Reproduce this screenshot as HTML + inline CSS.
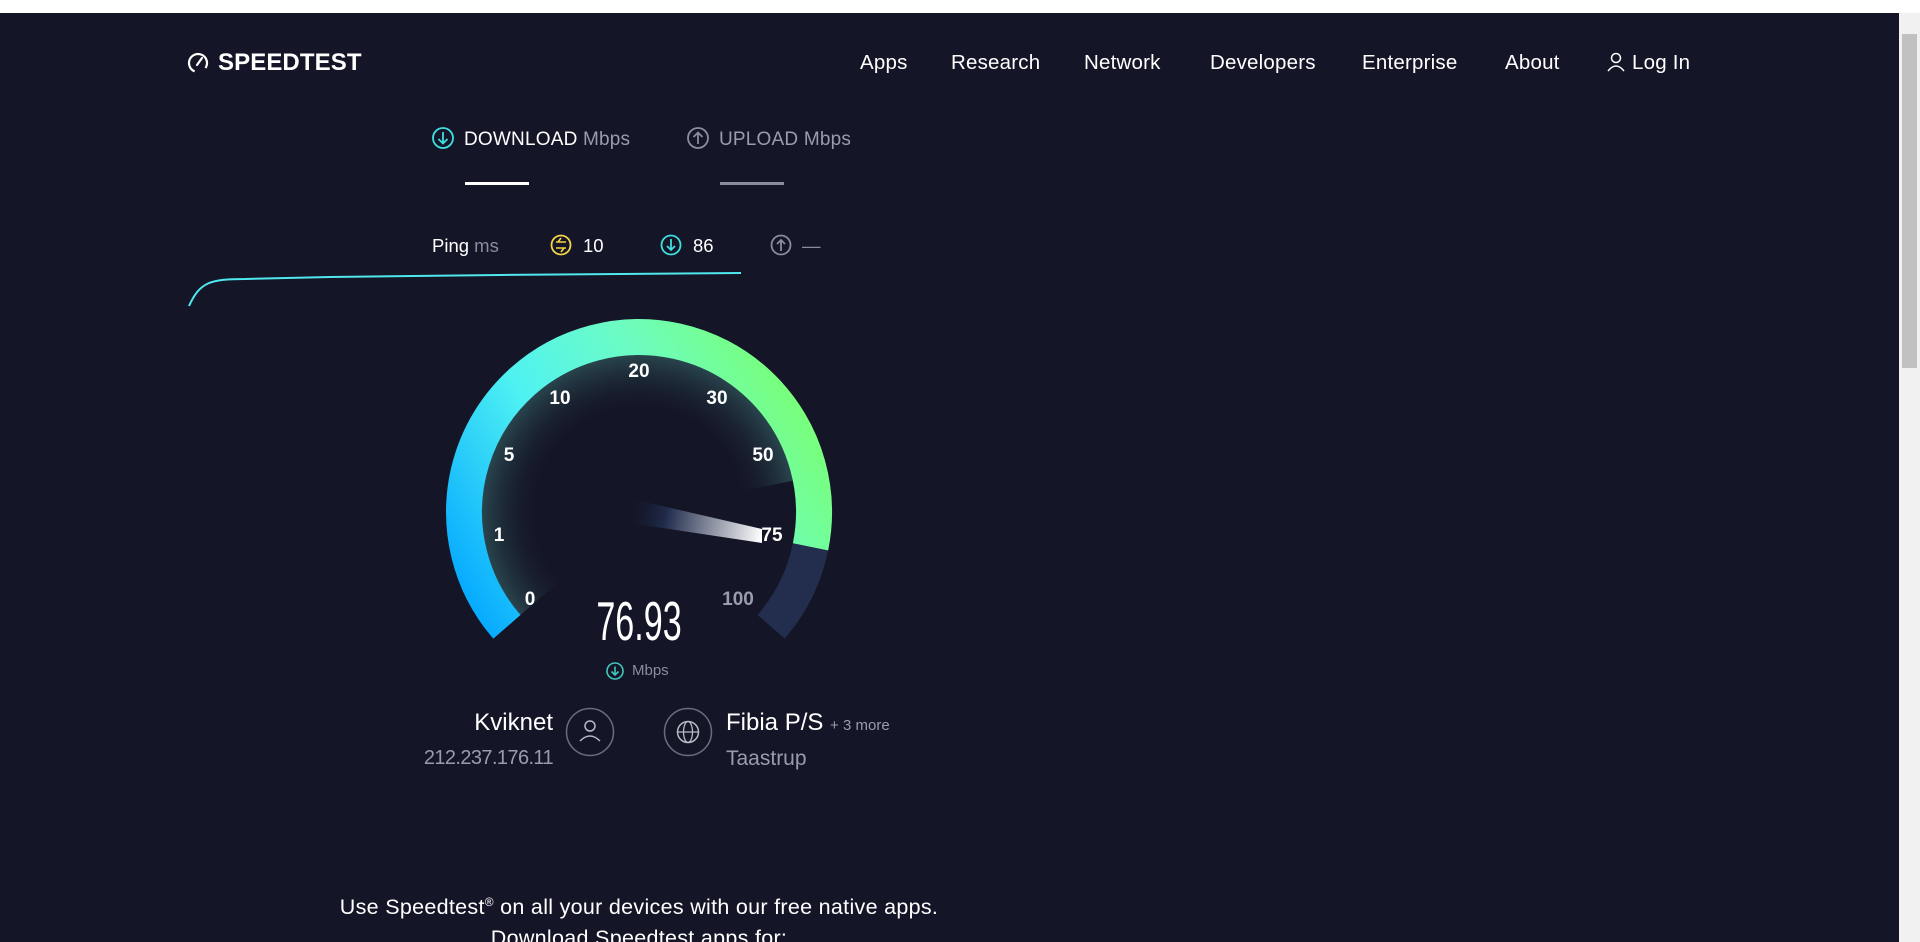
<!DOCTYPE html>
<html><head><meta charset="utf-8"><style>
*{margin:0;padding:0;box-sizing:border-box}
html,body{width:1920px;height:942px;overflow:hidden;background:#fff}
body{position:relative;font-family:"Liberation Sans",sans-serif}
#main{position:absolute;left:0;top:13px;width:1899px;height:929px;background:#141526;overflow:hidden}
.t{position:absolute;white-space:nowrap;color:#fff}
.nav{font-size:20.5px;top:38px;color:#fff;letter-spacing:0.2px}
#sb{position:absolute;left:1899px;top:13px;width:21px;height:929px;background:#f1f1f1}
#thumb{position:absolute;left:3px;top:21px;width:15px;height:334px;background:#c1c1c1}
</style></head><body>
<div id="main">
 <svg style="position:absolute;left:0;top:0" width="1899" height="929" viewBox="0 13 1899 929">
  <defs>
   <linearGradient id="g" gradientUnits="userSpaceOnUse" x1="490" y1="640" x2="820" y2="440">
    <stop offset="0" stop-color="#06aaff"/>
    <stop offset="0.4" stop-color="#4ff2f2"/>
    <stop offset="0.7" stop-color="#6cfcc4"/>
    <stop offset="1" stop-color="#78ff7c"/>
   </linearGradient>
   <radialGradient id="glow" cx="639" cy="512" r="158" gradientUnits="userSpaceOnUse">
    <stop offset="0.6" stop-color="#141526" stop-opacity="0"/>
    <stop offset="1" stop-color="#3a6e6e" stop-opacity="0.55"/>
   </radialGradient>
   <linearGradient id="nd" gradientUnits="userSpaceOnUse" x1="623" y1="510" x2="762" y2="536">
    <stop offset="0" stop-color="#141526" stop-opacity="0"/>
    <stop offset="0.3" stop-color="#1f2a4a"/>
    <stop offset="1" stop-color="#ffffff"/>
   </linearGradient>
  </defs>
  <circle cx="198" cy="63" r="9" fill="none" stroke="#fff" stroke-width="2.2" stroke-dasharray="44 13" transform="rotate(112 198 63)"/>
  <line x1="197" y1="65" x2="202" y2="58" stroke="#fff" stroke-width="2.2" stroke-linecap="round"/>
  <circle cx="1616" cy="58" r="4.5" fill="none" stroke="#fff" stroke-width="1.5"/>
  <path d="M1608 71 q8 -10 16 0" fill="none" stroke="#fff" stroke-width="1.5"/>
  <circle cx="443" cy="138" r="10" fill="none" stroke="#3fe0e0" stroke-width="1.8"/>
  <path d="M443 132v11M438.5 139l4.5 4.5 4.5-4.5" fill="none" stroke="#3fe0e0" stroke-width="1.8"/>
  <circle cx="698" cy="138" r="10" fill="none" stroke="#8a8d9e" stroke-width="1.8"/>
  <path d="M698 144v-11M693.5 137l4.5-4.5 4.5 4.5" fill="none" stroke="#8a8d9e" stroke-width="1.8"/>
  <rect x="465" y="182" width="64" height="3" fill="#fff"/>
  <rect x="720" y="182" width="64" height="3" fill="#8a8d9e"/>
  <circle cx="561" cy="245" r="9.5" fill="none" stroke="#f5d547" stroke-width="1.8"/>
  <path d="M556 242h10M558 242l3-4M556 248h10M564 248l-3 4" fill="none" stroke="#f5d547" stroke-width="1.6"/>
  <circle cx="671" cy="245" r="9.5" fill="none" stroke="#3fe0e0" stroke-width="1.8"/>
  <path d="M671 239v11M667 246l4 4 4-4" fill="none" stroke="#3fe0e0" stroke-width="1.8"/>
  <circle cx="781" cy="245" r="9.5" fill="none" stroke="#8a8d9e" stroke-width="1.8"/>
  <path d="M781 251v-11M777 244l4-4 4 4" fill="none" stroke="#8a8d9e" stroke-width="1.8"/>
  <path d="M189 306 C200 282 210 279 245 279 L330 277 L500 275 L741 273" fill="none" stroke="#4fe8ee" stroke-width="2"/>
  <path d="M639 512 L519.9 615.5 A158 158 0 1 1 794 480.5 Z" fill="url(#glow)"/>
  <path d="M506.9 626.8 A175 175 0 1 1 810.5 546.9" fill="none" stroke="url(#g)" stroke-width="36"/>
  <path d="M810.5 546.9 A175 175 0 0 1 771.1 626.8" fill="none" stroke="#232d4d" stroke-width="36"/>
  <polygon points="623,497 762,529 762,543 623,522" fill="url(#nd)"/>
  <g font-family="Liberation Sans,sans-serif" font-weight="bold" font-size="19" fill="#fff" text-anchor="middle">
   <text x="530" y="605">0</text>
   <text x="499" y="541">1</text>
   <text x="509" y="461">5</text>
   <text x="560" y="404">10</text>
   <text x="639" y="377">20</text>
   <text x="717" y="404">30</text>
   <text x="763" y="461">50</text>
   <text x="772" y="541">75</text>
   <text x="738" y="605" fill="#9a9cab">100</text>
  </g>
  <circle cx="615" cy="671" r="8" fill="none" stroke="#3fc7c0" stroke-width="1.6"/>
  <path d="M615 666.5v8M611.5 671.5l3.5 3.5 3.5-3.5" fill="none" stroke="#3fc7c0" stroke-width="1.6"/>
  <circle cx="590" cy="732" r="23.5" fill="none" stroke="#6b6e80" stroke-width="1.5"/>
  <circle cx="590" cy="726" r="5" fill="none" stroke="#b8bac6" stroke-width="1.5"/>
  <path d="M580 741 q10 -10 20 0" fill="none" stroke="#b8bac6" stroke-width="1.5"/>
  <circle cx="688" cy="732" r="23.5" fill="none" stroke="#6b6e80" stroke-width="1.5"/>
  <circle cx="688" cy="732" r="10.5" fill="none" stroke="#b8bac6" stroke-width="1.5"/>
  <ellipse cx="688" cy="732" rx="4.5" ry="10.5" fill="none" stroke="#b8bac6" stroke-width="1.3"/>
  <path d="M677.5 732h21" stroke="#b8bac6" stroke-width="1.3"/>
 </svg>
 <div class="t" style="left:218px;top:36px;font-size:24px;font-weight:bold;letter-spacing:0.1px">SPEEDTEST</div>
 <div class="t nav" style="left:860px">Apps</div>
 <div class="t nav" style="left:951px">Research</div>
 <div class="t nav" style="left:1084px">Network</div>
 <div class="t nav" style="left:1210px">Developers</div>
 <div class="t nav" style="left:1362px">Enterprise</div>
 <div class="t nav" style="left:1505px">About</div>
 <div class="t nav" style="left:1632px">Log In</div>
 <div class="t" style="left:464px;top:116px;font-size:19px;letter-spacing:0.2px">DOWNLOAD <span style="color:#9a9cab">Mbps</span></div>
 <div class="t" style="left:719px;top:116px;font-size:19px;color:#9a9cab;letter-spacing:0.2px">UPLOAD Mbps</div>
 <div class="t" style="left:432px;top:222px;font-size:18.5px">Ping <span style="color:#8a8d9e">ms</span></div>
 <div class="t" style="left:583px;top:222px;font-size:18.5px">10</div>
 <div class="t" style="left:693px;top:222px;font-size:18.5px">86</div>
 <div class="t" style="left:802px;top:222px;font-size:18.5px;color:#8a8d9e">—</div>
 <div class="t" style="left:539px;top:576px;width:200px;text-align:center;font-size:55px;font-weight:normal;transform:scaleX(0.62);">76.93</div>
 <div class="t" style="left:632px;top:649px;font-size:15px;color:#8a8d9e">Mbps</div>
 <div class="t" style="left:353px;top:696px;width:200px;text-align:right;font-size:24px">Kviknet</div>
 <div class="t" style="left:353px;top:734px;width:200px;text-align:right;font-size:20px;color:#9a9cab;letter-spacing:-0.6px">212.237.176.11</div>
 <div class="t" style="left:726px;top:696px;font-size:24px">Fibia P/S <span style="font-size:15px;color:#9a9cab">+ 3 more</span></div>
 <div class="t" style="left:726px;top:734px;font-size:21px;color:#9a9cab">Taastrup</div>
 <div class="t" style="left:139px;top:882px;width:1000px;text-align:center;font-size:21.5px;letter-spacing:0.3px">Use Speedtest<sup style="font-size:12px">®</sup> on all your devices with our free native apps.</div>
 <div class="t" style="left:139px;top:913px;width:1000px;text-align:center;font-size:21.5px;letter-spacing:0.3px">Download Speedtest apps for:</div>
</div>
<div id="sb"><div id="thumb"></div></div>
</body></html>
